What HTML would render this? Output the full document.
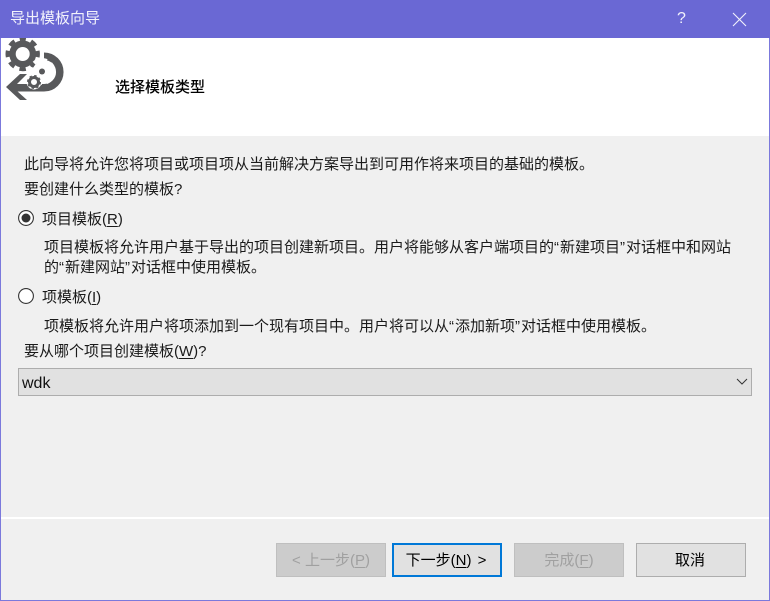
<!DOCTYPE html>
<html><head><meta charset="utf-8"><style>
html,body{margin:0;padding:0;width:770px;height:601px;overflow:hidden;background:#f0f0f0}
body{position:relative;font-family:"Liberation Sans","Noto Sans CJK SC",sans-serif;font-size:15px;color:#1a1a1a}
.a{position:absolute;white-space:nowrap;line-height:20px}
.b{position:absolute;top:543px;width:110px;height:34px;box-sizing:border-box;border:1px solid #adadad;background:#e1e1e1;text-align:center;line-height:34px;color:#000}
.d{background:#cccccc;border-color:#bfbfbf;color:#a0a0a0}
u{text-underline-offset:2px}
i{font-style:normal;letter-spacing:1px}
</style></head><body>
<div style="position:absolute;left:0;top:0;width:770px;height:38px;background:#6a68d4"></div>
<div style="position:absolute;left:1px;top:38px;width:768px;height:98px;background:#fff"></div>
<div style="position:absolute;left:0;top:38px;width:1px;height:563px;background:#7b79dc"></div>
<div style="position:absolute;right:0;top:38px;width:1px;height:563px;background:#7b79dc"></div>
<div style="position:absolute;left:0;top:600px;width:770px;height:1px;background:#7b79dc"></div>
<div style="position:absolute;left:1px;top:517px;width:768px;height:2px;background:#fff"></div>
<div class="a" style="left:10px;top:9px;font-size:15px;color:#f2f2fb">导出模板向导</div>
<div class="a" style="left:677px;top:9px;font-size:16px;color:#f2f2fb">?</div>
<svg style="position:absolute;left:732px;top:12px" width="15" height="15"><path d="M1 1L14 14M14 1L1 14" stroke="#f2f2fb" stroke-width="1.1" fill="none"/></svg>

<svg style="position:absolute;left:0;top:38px" width="80" height="70" viewBox="0 38 80 70">
<path d="M44 56.200A15.800 15.800 0 0 1 44 87.800L16 87.800" fill="none" stroke="#58595b" stroke-width="7.500"/>
<path d="M6 87L20 74H27L17 84V91L27 100H20Z" fill="#58595b"/>
<circle cx="22.700" cy="54" r="13.500" fill="#58595b"/>
<circle cx="22.700" cy="54" r="15.200" fill="none" stroke="#58595b" stroke-width="4" stroke-dasharray="6.400 5.540" stroke-dashoffset="3.200" transform="rotate(-90 22.700 54)"/>
<circle cx="22.700" cy="54" r="7" fill="#fff"/>
<circle cx="42" cy="71.500" r="9.500" fill="#fff"/>
<circle cx="42" cy="71.500" r="11.500" fill="none" stroke="#fff" stroke-width="4" stroke-dasharray="4.500 4.530"/>
<circle cx="42" cy="71.500" r="3" fill="#58595b"/>
<circle cx="34" cy="82" r="7.500" fill="#fff"/>
<circle cx="34" cy="82" r="4.500" fill="none" stroke="#58595b" stroke-width="3"/>
<circle cx="34" cy="82" r="6" fill="none" stroke="#58595b" stroke-width="2" stroke-dasharray="2.400 2.310"/>
</svg>

<div class="a" style="left:115px;top:78px;font-size:15px;color:#000;font-weight:500">选择模板类型</div>
<div class="a" style="left:24px;top:155px">此向导将允许您将项目或项目项从当前解决方案导出到可用作将来项目的基础的模板。</div>
<div class="a" style="left:24px;top:180px">要创建什么类型的模板?</div>

<svg style="position:absolute;left:18px;top:210px" width="16" height="16"><circle cx="8" cy="8" r="7.400" fill="#fff" stroke="#333" stroke-width="1.100"/><circle cx="8" cy="8" r="4.500" fill="#333"/></svg>
<div class="a" style="left:42px;top:210px">项目模板(<u>R</u>)</div>
<div class="a" style="left:44px;top:238px">项目模板将允许用户基于导出的项目创建新项目。用户将能够从客户端项目的<i>“</i>新建项目<i>”</i>对话框中和网站</div>
<div class="a" style="left:44px;top:258px">的<i>“</i>新建网站<i>”</i>对话框中使用模板。</div>

<svg style="position:absolute;left:18px;top:288px" width="16" height="16"><circle cx="8" cy="8" r="7.400" fill="#fff" stroke="#333" stroke-width="1.100"/></svg>
<div class="a" style="left:42px;top:288px">项模板(<u>I</u>)</div>
<div class="a" style="left:44px;top:317px">项模板将允许用户将项添加到一个现有项目中。用户将可以从<i>“</i>添加新项<i>”</i>对话框中使用模板。</div>
<div class="a" style="left:24px;top:342px">要从哪个项目创建模板(<u>W</u>)?</div>

<div style="position:absolute;left:18px;top:368px;width:734px;height:28px;box-sizing:border-box;border:1px solid #adadad;background:#e1e1e1"></div>
<div class="a" style="left:22px;top:374px;font-size:16px;color:#111">wdk</div>
<svg style="position:absolute;left:736px;top:378px" width="12" height="8"><path d="M1 1L6 6L11 1" stroke="#333" stroke-width="1" fill="none"/></svg>

<div class="b d" style="left:276px">&lt; 上一步(<u>P</u>)</div>
<div class="b" style="left:392px;border:2px solid #0078d7;line-height:32px;word-spacing:2px;padding-right:2px">下一步(<u>N</u>) &gt;</div>
<div class="b d" style="left:514px">完成(<u>F</u>)</div>
<div class="b" style="left:636px;padding-right:2px">取消</div>
</body></html>
